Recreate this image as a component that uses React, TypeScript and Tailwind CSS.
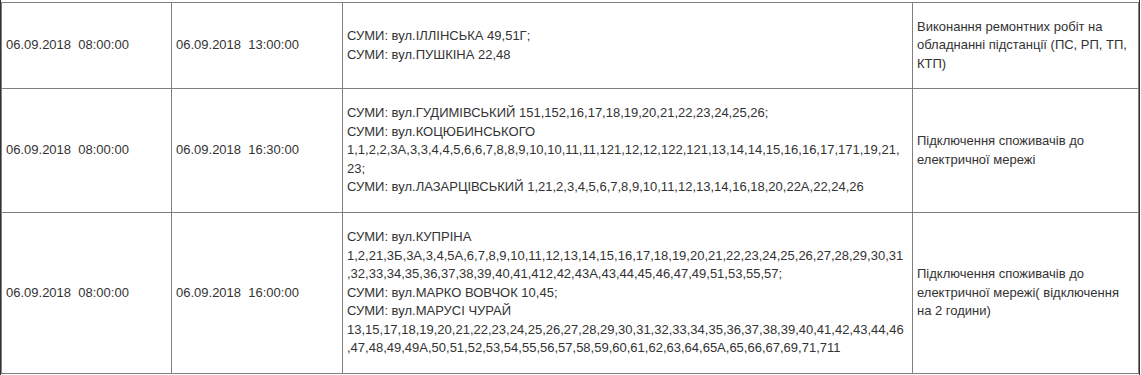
const rows = [
  {
    from: "06.09.2018\u00a0\u00a008:00:00",
    to: "06.09.2018\u00a0\u00a013:00:00",
    addr: ["СУМИ: вул.ІЛЛІНСЬКА 49,51Г;", "СУМИ: вул.ПУШКІНА 22,48"],
    reason: "Виконання ремонтних робіт на обладнанні підстанції (ПС, РП, ТП, КТП)",
    h: "h-[85px]",
  },
  {
    from: "06.09.2018\u00a0\u00a008:00:00",
    to: "06.09.2018\u00a0\u00a016:30:00",
    addr: [
      "СУМИ: вул.ГУДИМІВСЬКИЙ 151,152,16,17,18,19,20,21,22,23,24,25,26;",
      "СУМИ: вул.КОЦЮБИНСЬКОГО",
      "1,1,2,2,3А,3,3,4,4,5,6,6,7,8,8,9,10,10,11,11,121,12,12,122,121,13,14,14,15,16,16,17,171,19,21,",
      "23;",
      "СУМИ: вул.ЛАЗАРЦІВСЬКИЙ 1,21,2,3,4,5,6,7,8,9,10,11,12,13,14,16,18,20,22А,22,24,26",
    ],
    reason: "Підключення споживачів до електричної мережі",
    h: "h-[123px]",
  },
  {
    from: "06.09.2018\u00a0\u00a008:00:00",
    to: "06.09.2018\u00a0\u00a016:00:00",
    addr: [
      "СУМИ: вул.КУПРІНА",
      "1,2,21,3Б,3А,3,4,5А,6,7,8,9,10,11,12,13,14,15,16,17,18,19,20,21,22,23,24,25,26,27,28,29,30,31",
      ",32,33,34,35,36,37,38,39,40,41,412,42,43А,43,44,45,46,47,49,51,53,55,57;",
      "СУМИ: вул.МАРКО ВОВЧОК 10,45;",
      "СУМИ: вул.МАРУСІ ЧУРАЙ",
      "13,15,17,18,19,20,21,22,23,24,25,26,27,28,29,30,31,32,33,34,35,36,37,38,39,40,41,42,43,44,46",
      ",47,48,49,49А,50,51,52,53,54,55,56,57,58,59,60,61,62,63,64,65А,65,66,67,69,71,711",
    ],
    reason: "Підключення споживачів до електричної мережі( відключення на 2 години)",
    h: "h-[160px]",
  },
];

const cell = "flex items-center bg-white px-1";

export default function App() {
  return (
    <div className="h-[375px] w-[1140px] border-x border-[#333] bg-white pt-[2px] font-['Liberation_Sans',Arial,sans-serif] text-[13px] leading-[1.42857] text-[#333]">
      <div className="grid grid-cols-[169px_170px_569px_225px] gap-px bg-[#808080] p-px">
        {rows.map((r, i) => (
          <div key={i} className="contents">
            <div className={`${cell} ${r.h}`}>{r.from}</div>
            <div className={`${cell} ${r.h}`}>{r.to}</div>
            <div className={`${cell} ${r.h}`}>
              <div>
                {r.addr.map((line, j) => (
                  <div key={j} className="whitespace-nowrap">
                    {line}
                  </div>
                ))}
              </div>
            </div>
            <div className={`${cell} ${r.h}`}>{r.reason}</div>
          </div>
        ))}
      </div>
    </div>
  );
}
